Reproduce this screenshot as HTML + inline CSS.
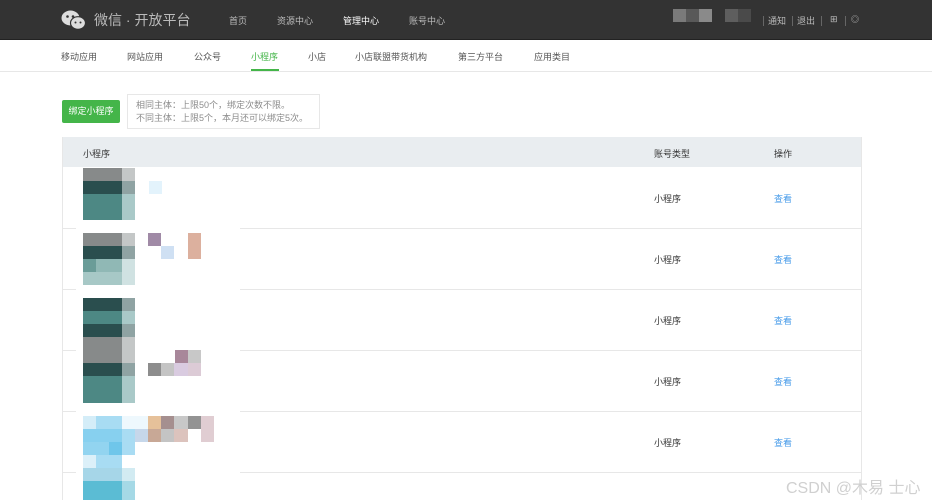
<!DOCTYPE html>
<html><head><meta charset="utf-8"><style>
*{margin:0;padding:0;box-sizing:border-box}
body{width:932px;height:500px;overflow:hidden;background:#fff;font-family:"Liberation Sans","Noto Sans CJK SC",sans-serif;font-size:9px;color:#353535;position:relative}
.a{position:absolute}
.top{left:0;top:0;width:932px;height:40px;background:#333;border-bottom:1px solid #222}
.top span{position:absolute;top:14px;font-size:9px;color:#bbb}
.sub{left:0;top:40px;width:932px;height:32px;border-bottom:1px solid #e7e7e7}
.sub span{position:absolute;top:10px;font-size:9px;color:#555}
.p{position:absolute}
.line{position:absolute;left:62px;width:800px;height:1px;background:#e7e7e7}
.t{position:absolute;font-size:9px;color:#353535}
.v{position:absolute;font-size:9px;color:#459ae9}
</style></head><body>
<div class="a top">
<svg class="a" style="left:61px;top:9px" width="26" height="22" viewBox="0 0 26 22"><ellipse cx="9.5" cy="9" rx="9" ry="7.5" fill="#ddd"/><ellipse cx="17" cy="14" rx="7.5" ry="6.3" fill="#ddd" stroke="#333" stroke-width="1.2"/><circle cx="6.5" cy="7.5" r="1.3" fill="#333"/><circle cx="12" cy="7.5" r="1.3" fill="#333"/><circle cx="14.5" cy="13.5" r="1" fill="#333"/><circle cx="19.5" cy="13.5" r="1" fill="#333"/></svg>
<span style="left:94px;top:10px;font-size:14px;color:#bbb">微信 · 开放平台</span>
<span style="left:229px">首页</span>
<span style="left:277px">资源中心</span>
<span style="left:343px;color:#fff">管理中心</span>
<span style="left:409px">账号中心</span>
<div class="p" style="left:673px;top:9px;width:13px;height:13px;background:#7a7a7a"></div>
<div class="p" style="left:686px;top:9px;width:13px;height:13px;background:#595959"></div>
<div class="p" style="left:699px;top:9px;width:13px;height:13px;background:#8a8a8a"></div>
<div class="p" style="left:725px;top:9px;width:13px;height:13px;background:#5e5e5e"></div>
<div class="p" style="left:738px;top:9px;width:13px;height:13px;background:#4a4a4a"></div>
<div class="p" style="left:763px;top:16px;width:1px;height:10px;background:#666"></div>
<span style="left:768px">通知</span>
<div class="p" style="left:792px;top:16px;width:1px;height:10px;background:#666"></div>
<span style="left:797px">退出</span>
<div class="p" style="left:821px;top:16px;width:1px;height:10px;background:#666"></div>
<span style="left:830px">⊞</span>
<div class="p" style="left:845px;top:16px;width:1px;height:10px;background:#666"></div>
<span style="left:851px;font-size:8px">◎</span>
</div>
<div class="a sub">
<span style="left:61px">移动应用</span>
<span style="left:127px">网站应用</span>
<span style="left:194px">公众号</span>
<span style="left:251px;color:#44b549">小程序</span>
<div class="p" style="left:251px;top:29px;width:28px;height:2px;background:#44b549"></div>
<span style="left:308px">小店</span>
<span style="left:355px">小店联盟带货机构</span>
<span style="left:458px">第三方平台</span>
<span style="left:534px">应用类目</span>
</div>
<div class="a" style="left:62px;top:100px;width:58px;height:23px;background:#44b549;border-radius:2px;color:#fff;font-size:9px;line-height:23px;text-align:center">绑定小程序</div>
<div class="a" style="left:127px;top:94px;width:193px;height:35px;border:1px solid #e7e7e7;color:#8d8d8d;font-size:9px;line-height:13px;padding:4px 0 0 8px">相同主体：上限50个，绑定次数不限。<br>不同主体：上限5个，本月还可以绑定5次。</div>
<div class="a" style="left:62px;top:137px;width:800px;height:30px;background:#e9edf0"></div>
<div class="a" style="left:62px;top:137px;width:1px;height:363px;background:#e7e7e7"></div>
<div class="a" style="left:861px;top:137px;width:1px;height:363px;background:#e7e7e7"></div>
<div class="t" style="left:83px;top:147px">小程序</div>
<div class="t" style="left:654px;top:147px">账号类型</div>
<div class="t" style="left:774px;top:147px">操作</div>
<div class="line" style="top:228px"></div><div class="line" style="top:289px"></div><div class="line" style="top:350px"></div><div class="line" style="top:411px"></div><div class="line" style="top:472px"></div>
<div class="p" style="left:76px;top:168px;width:164px;height:332px;background:#fff"></div>
<div class="t" style="left:654px;top:192px">小程序</div><div class="v" style="left:774px;top:192px">查看</div>
<div class="t" style="left:654px;top:253px">小程序</div><div class="v" style="left:774px;top:253px">查看</div>
<div class="t" style="left:654px;top:314px">小程序</div><div class="v" style="left:774px;top:314px">查看</div>
<div class="t" style="left:654px;top:375px">小程序</div><div class="v" style="left:774px;top:375px">查看</div>
<div class="t" style="left:654px;top:436px">小程序</div><div class="v" style="left:774px;top:436px">查看</div>
<div class="p" style="left:83px;top:168px;width:39px;height:13px;background:#878a8a"></div><div class="p" style="left:122px;top:168px;width:13px;height:13px;background:#c4c7c7"></div>
<div class="p" style="left:83px;top:181px;width:39px;height:13px;background:#2a4e4e"></div><div class="p" style="left:122px;top:181px;width:13px;height:13px;background:#8fa3a3"></div>
<div class="p" style="left:83px;top:194px;width:39px;height:26px;background:#4d8884"></div><div class="p" style="left:122px;top:194px;width:13px;height:26px;background:#a9c9c8"></div>
<div class="p" style="left:149px;top:181px;width:13px;height:13px;background:#e3f3fc"></div>
<div class="p" style="left:83px;top:233px;width:39px;height:13px;background:#878a8a"></div><div class="p" style="left:122px;top:233px;width:13px;height:13px;background:#c4c7c7"></div>
<div class="p" style="left:83px;top:246px;width:39px;height:13px;background:#2a4e4e"></div><div class="p" style="left:122px;top:246px;width:13px;height:13px;background:#8fa3a3"></div>
<div class="p" style="left:83px;top:259px;width:13px;height:13px;background:#6a9c98"></div><div class="p" style="left:96px;top:259px;width:26px;height:13px;background:#90b8b5"></div><div class="p" style="left:122px;top:259px;width:13px;height:26px;background:#d0e2e2"></div>
<div class="p" style="left:83px;top:272px;width:39px;height:13px;background:#a7c8c6"></div>
<div class="p" style="left:148px;top:233px;width:13px;height:13px;background:#a08aa6"></div>
<div class="p" style="left:161px;top:246px;width:13px;height:13px;background:#cfe0f3"></div>
<div class="p" style="left:188px;top:233px;width:13px;height:26px;background:#dcb09e"></div>
<div class="p" style="left:83px;top:298px;width:39px;height:13px;background:#2a4e4e"></div>
<div class="p" style="left:83px;top:311px;width:39px;height:13px;background:#4d8884"></div>
<div class="p" style="left:83px;top:324px;width:39px;height:13px;background:#2a4e4e"></div>
<div class="p" style="left:83px;top:337px;width:39px;height:26px;background:#878a8a"></div>
<div class="p" style="left:83px;top:363px;width:39px;height:13px;background:#2a4e4e"></div>
<div class="p" style="left:83px;top:376px;width:39px;height:27px;background:#4d8884"></div>
<div class="p" style="left:122px;top:298px;width:13px;height:13px;background:#8fa3a3"></div>
<div class="p" style="left:122px;top:311px;width:13px;height:13px;background:#a9c9c8"></div>
<div class="p" style="left:122px;top:324px;width:13px;height:13px;background:#8fa3a3"></div>
<div class="p" style="left:122px;top:337px;width:13px;height:26px;background:#c4c7c7"></div>
<div class="p" style="left:122px;top:363px;width:13px;height:13px;background:#8fa3a3"></div>
<div class="p" style="left:122px;top:376px;width:13px;height:27px;background:#a9c9c8"></div>
<div class="p" style="left:175px;top:350px;width:13px;height:13px;background:#a8879a"></div>
<div class="p" style="left:188px;top:350px;width:13px;height:13px;background:#c8c8c8"></div>
<div class="p" style="left:148px;top:363px;width:13px;height:13px;background:#8d8d8d"></div>
<div class="p" style="left:161px;top:363px;width:13px;height:13px;background:#c4c4c4"></div>
<div class="p" style="left:174px;top:363px;width:14px;height:13px;background:#d9cbe0"></div>
<div class="p" style="left:188px;top:363px;width:13px;height:13px;background:#dccbd6"></div>
<div class="p" style="left:83px;top:416px;width:13px;height:13px;background:#d4edf8"></div><div class="p" style="left:96px;top:416px;width:26px;height:13px;background:#a8dcf3"></div><div class="p" style="left:122px;top:416px;width:26px;height:13px;background:#eef8fd"></div>
<div class="p" style="left:83px;top:429px;width:39px;height:13px;background:#87d0ef"></div><div class="p" style="left:122px;top:429px;width:13px;height:26px;background:#a9dcf3"></div><div class="p" style="left:135px;top:429px;width:13px;height:13px;background:#c6d7ea"></div>
<div class="p" style="left:83px;top:442px;width:26px;height:13px;background:#92d4f0"></div><div class="p" style="left:109px;top:442px;width:13px;height:13px;background:#6fc6ea"></div>
<div class="p" style="left:83px;top:455px;width:13px;height:13px;background:#dcf0f9"></div><div class="p" style="left:96px;top:455px;width:26px;height:13px;background:#a8dcf3"></div>
<div class="p" style="left:83px;top:468px;width:39px;height:13px;background:#a6d6e8"></div><div class="p" style="left:122px;top:468px;width:13px;height:13px;background:#d2ebf2"></div>
<div class="p" style="left:83px;top:481px;width:39px;height:19px;background:#5bbcd4"></div><div class="p" style="left:122px;top:481px;width:13px;height:19px;background:#a5d9e6"></div>
<div class="p" style="left:148px;top:416px;width:13px;height:13px;background:#e6c19a"></div>
<div class="p" style="left:161px;top:416px;width:13px;height:13px;background:#a58f8f"></div>
<div class="p" style="left:174px;top:416px;width:14px;height:13px;background:#c8c8c8"></div>
<div class="p" style="left:188px;top:416px;width:13px;height:13px;background:#939393"></div>
<div class="p" style="left:201px;top:416px;width:13px;height:26px;background:#e0cdd2"></div>
<div class="p" style="left:148px;top:429px;width:13px;height:13px;background:#c8a896"></div>
<div class="p" style="left:161px;top:429px;width:13px;height:13px;background:#c4c4c4"></div>
<div class="p" style="left:174px;top:429px;width:14px;height:13px;background:#dcc3bd"></div>
<div class="a" style="left:786px;top:474px;font-size:16px;color:#d0d0d0">CSDN @木易 士心</div>
</body></html>
